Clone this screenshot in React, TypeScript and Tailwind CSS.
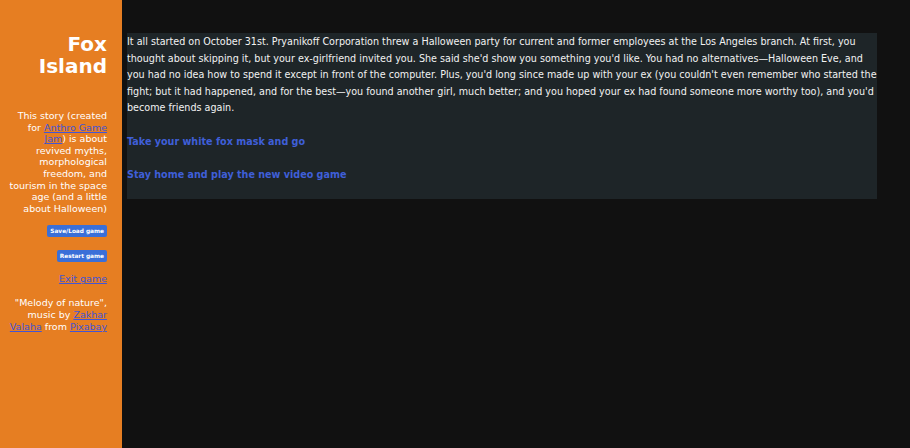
import React from "react";

const font = { fontFamily: '"DejaVu Sans", Verdana, sans-serif' };

export default function App() {
  return (
    <div
      className="flex h-[448px] w-[910px] overflow-hidden bg-[#111111]"
      style={font}
    >
      {/* Sidebar */}
      <aside className="w-[122px] shrink-0 bg-[#e67e22] pl-[8px] pr-[15px] pt-[33px] text-right text-white">
        <h1 className="text-[20px] font-bold leading-[22px]">
          Fox
          <br />
          Island
        </h1>
        <p className="mt-[33px] text-[9.5px] leading-[11.6px]">
          This story (created for{" "}
          <a href="#" className="text-[#4355d6] underline">
            Anthro Game Jam
          </a>
          ) is about revived myths, morphological freedom, and tourism in the
          space age (and a little about Halloween)
        </p>
        <div className="mt-[11px] flex flex-col items-end gap-[13px]">
          <button className="h-[12px] rounded-[2px] bg-[#3a6fd8] px-[3px] text-[5.8px] font-semibold leading-[12px] text-white">
            Save/Load game
          </button>
          <button className="h-[12px] rounded-[2px] bg-[#3a6fd8] px-[3px] text-[5.8px] font-semibold leading-[12px] text-white">
            Restart game
          </button>
        </div>
        <a
          href="#"
          className="mt-[11px] block text-[9.5px] leading-[12px] text-[#4355d6] underline"
        >
          Exit game
        </a>
        <p className="mt-[12px] text-[9.5px] leading-[11.6px]">
          "Melody of nature", music by{" "}
          <a href="#" className="text-[#4355d6] underline">
            Zakhar Valaha
          </a>{" "}
          from{" "}
          <a href="#" className="text-[#4355d6] underline">
            Pixabay
          </a>
        </p>
      </aside>

      {/* Story */}
      <main className="flex-1 pl-[5px] pt-[33px]">
        <div className="h-[166px] w-[750px] bg-[#1e2528] pt-[1px] text-[#f2f2f2]">
          <p className="text-[9.6px] leading-[16.5px]">
            It all started on October 31st. Pryanikoff Corporation threw a
            Halloween party for current and former employees at the Los Angeles
            branch. At first, you thought about skipping it, but your
            ex-girlfriend invited you. She said she'd show you something you'd
            like. You had no alternatives—Halloween Eve, and you had no idea how
            to spend it except in front of the computer. Plus, you'd long since
            made up with your ex (you couldn't even remember who started the
            fight; but it had happened, and for the best—you found another
            girl, much better; and you hoped your ex had found someone more
            worthy too), and you'd become friends again.
          </p>
          <a
            href="#"
            className="mt-[17px] block text-[9.6px] font-bold leading-[16.5px] text-[#3f5fd8]"
          >
            Take your white fox mask and go
          </a>
          <a
            href="#"
            className="mt-[16.5px] block text-[9.6px] font-bold leading-[16.5px] text-[#3f5fd8]"
          >
            Stay home and play the new video game
          </a>
        </div>
      </main>
    </div>
  );
}
